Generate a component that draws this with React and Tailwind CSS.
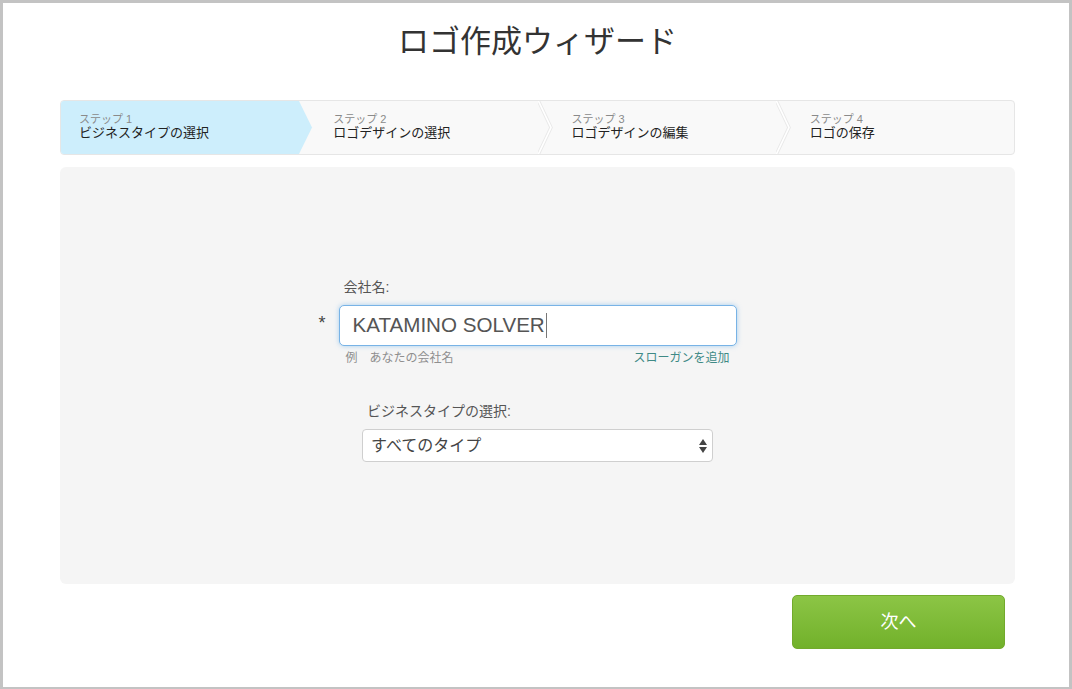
import React from 'react'

const steps = [
  { label: 'ステップ 1', title: 'ビジネスタイプの選択' },
  { label: 'ステップ 2', title: 'ロゴデザインの選択' },
  { label: 'ステップ 3', title: 'ロゴデザインの編集' },
  { label: 'ステップ 4', title: 'ロゴの保存' },
]

const font = { fontFamily: '"Liberation Sans", "Noto Sans CJK JP", sans-serif' }

const StepBar = ({ active = 0 }) => (
  <div className='grid grid-cols-4 h-[55px] border border-[#e6e6e6] rounded-[4px] bg-[#f9f9f9] overflow-hidden'>
    {steps.map((step, index) => {
      const isActive = index === active
      const isLast = index === steps.length - 1
      return (
        <div
          key={step.label}
          className={`relative flex flex-col justify-center pb-[3px] ${index === 0 ? 'pl-[18px]' : 'pl-[34px]'} ${isActive ? 'bg-[#cdeefc]' : ''}`}
        >
          <span className='text-[11px] leading-[12px] text-[#8a8a8a]'>{step.label}</span>
          <span className='text-[13px] leading-[15px] text-[#222]'>{step.title}</span>
          {!isLast && (
            <svg className='absolute left-full top-0 h-full w-[15px] z-10' viewBox='0 0 15 55' preserveAspectRatio='none'>
              {isActive ? (
                <polygon points='0,0 13,27.5 0,55' fill='#cdeefc' />
              ) : (
                <>
                  <polyline points='0,-1 13,27.5 0,56' fill='none' stroke='#e9e9e9' strokeWidth='3.5' />
                  <polyline points='0,-1 13,27.5 0,56' fill='none' stroke='#ffffff' strokeWidth='1.6' />
                </>
              )}
            </svg>
          )}
        </div>
      )
    })}
  </div>
)

const App = () => {
  return (
    <div
      style={font}
      className='h-[689px] w-full bg-white border-t-[3px] border-x-[3px] border-b-[2px] border-[#c3c3c3] flex flex-col pl-[57px] pr-[54px]'
    >
      <h1 className='pt-[19px] text-center text-[31px] leading-[40px] font-normal text-[#333]'>ロゴ作成ウィザード</h1>

      <div className='mt-[38px]'>
        <StepBar active={0} />
      </div>

      <div className='mt-[12px] h-[417px] rounded-[6px] bg-[#f5f5f5] flex flex-col items-center pt-[110px]'>
        <div className='w-[398px]'>
          <p className='pl-[5px] text-[14px] leading-[20px] text-[#555] mb-[8px]'>会社名:</p>
          <div className='relative'>
            <span className='absolute -left-[20px] top-[8px] text-[18px] leading-[20px] text-[#444]'>*</span>
            <div className='h-[41px] flex items-center px-[13px] bg-white border border-[#78b3e6] rounded-[5px] shadow-[0_0_5px_rgba(102,175,233,0.55)]'>
              <span className='text-[20.6px] text-[#555]'>KATAMINO SOLVER</span>
              <span className='ml-[1px] w-[1px] h-[25px] bg-[#777]' />
            </div>
          </div>
          <div className='mt-[4px] flex justify-between px-[7px] text-[12px] leading-[16px]'>
            <span className='text-[#8f8f8f]'>例　あなたの会社名</span>
            <span className='text-[#3f8a86]'>スローガンを追加</span>
          </div>
        </div>

        <div className='w-[351px] mt-[35px]'>
          <p className='pl-[5px] text-[14px] leading-[20px] text-[#555] mb-[8px]'>ビジネスタイプの選択:</p>
          <div className='relative h-[33px] flex items-center pl-[8px] bg-white border border-[#cfcfcf] rounded-[4px]'>
            <span className='text-[16px] text-[#444]'>すべてのタイプ</span>
            <svg className='absolute right-[5px] top-[9px]' width='8' height='14' viewBox='0 0 8 14'>
              <polygon points='4,0 8,6 0,6' fill='#444' />
              <polygon points='0,8 8,8 4,14' fill='#444' />
            </svg>
          </div>
        </div>
      </div>

      <div className='flex justify-end pr-[10px] mt-[11px]'>
        <button className='w-[213px] h-[54px] rounded-[5px] border border-[#72aa2c] bg-gradient-to-b from-[#8cc545] to-[#72b12a] text-white text-[18px]'>
          次へ
        </button>
      </div>
    </div>
  )
}

export default App
